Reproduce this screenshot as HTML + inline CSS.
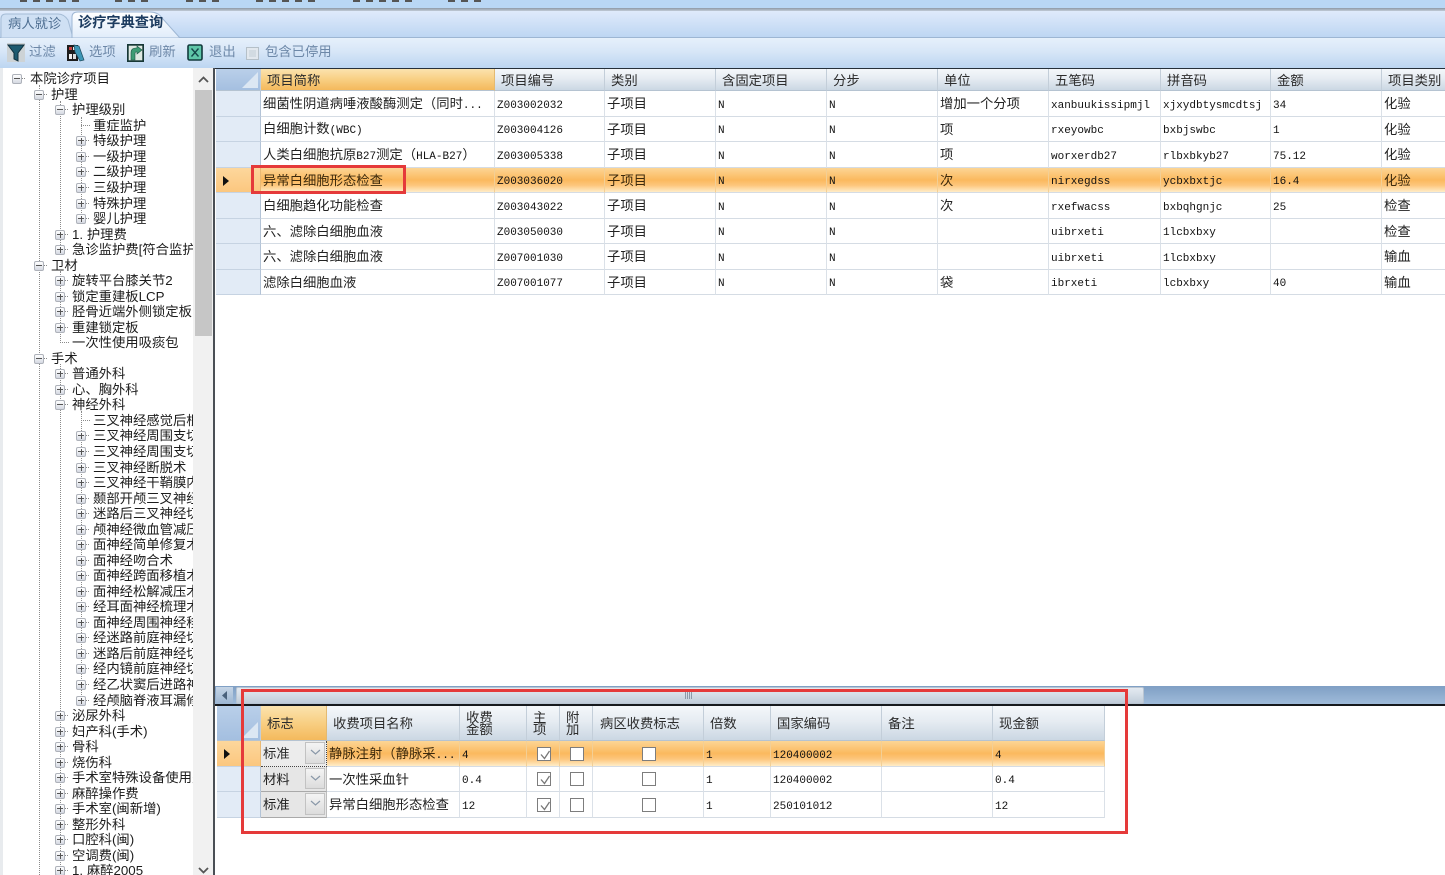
<!DOCTYPE html>
<html lang="zh"><head><meta charset="utf-8"><title>诊疗字典查询</title>
<style>
*{box-sizing:border-box}
html,body{margin:0;padding:0;width:1445px;height:875px;overflow:hidden;background:#fff}
body{position:relative;font:13.33px/1 "Liberation Sans","Noto Sans CJK SC",sans-serif;color:#222;filter:blur(.35px)}
.a{position:absolute}
tt{font:11px "Liberation Mono",monospace;color:#111}
.tb{color:#6d88a8;top:44px;line-height:15px}
/* tree */
#tree{left:3px;top:69px;width:190px;height:806px;overflow:hidden}
#rows{position:absolute;left:-3px;top:2.25px;width:193px}
#rows div{height:15.54px;line-height:15.5px;white-space:nowrap;position:relative;color:#1c1c1c}
.l0{padding-left:30px}.l1{padding-left:51px}.l2{padding-left:72px}.l3{padding-left:93px}
.v{position:absolute;width:0;border-left:1px dotted #8a8a8a}
#rows i{position:absolute;top:3px;width:10px;height:10px;border:1px solid #aeb2ba;border-radius:2px;background:linear-gradient(#fff,#d5d9e2)}
#rows i:before{content:"";position:absolute;left:1px;top:3px;width:6px;height:2px;border-top:1px solid #555}
#rows i:after{content:"";position:absolute;right:-4px;top:3px;width:3px;border-top:1px dotted #8a8a8a}
#rows i.p b{position:absolute;left:3.5px;top:1px;height:6px;border-left:1px solid #555}
.l0 i{left:12px}.l1 i{left:34px}.l2 i{left:55px}.l3 i{left:76px}
#rows em{position:absolute;top:7px;height:0;border-top:1px dotted #8a8a8a;width:9px}
.l3 em{left:81px}.l2 em{left:60px}
/* grids */
table{border-collapse:separate;border-spacing:0;table-layout:fixed;position:absolute}
td,th{padding:0 0 0 2px;border-right:1px solid #dbe1e8;border-bottom:1px solid #d5dce4;font-weight:400;text-align:left;white-space:nowrap;overflow:hidden;color:#222;line-height:15px}
th{padding:1px 0 0 6px;border-right:1px solid #c3ced9;border-bottom:1px solid #b5c3d1;background:linear-gradient(#f4f7fa,#e6ecf2 45%,#cbd7e3);color:#2c2c2c}
th.o{background:linear-gradient(#fbe3ae,#f8cf83 50%,#f4b95c);border-right-color:#e3ba72}
th.c{position:relative;background:linear-gradient(#b9cfe9,#a4bfe0);padding:0}
th.c:after{content:"";position:absolute;right:2px;bottom:2px;width:0;height:0;border-left:16px solid transparent;border-bottom:16px solid #dce7f3}
td.h{background:#e2ebf6;border-right:1px solid #b3c3d6;border-bottom:1px solid #c6d3e2;position:relative;padding:0}
tr.s td{background:linear-gradient(#fcd595,#fbb95e 50%,#fdc67c 72%,#ffedc9);border-right-color:#f3cf95;color:#3d2a0c}
tr.s td.h{background:linear-gradient(#fdd79c,#fbc77f);border-right-color:#e9b974}
tr.s td.h:after{content:"";position:absolute;left:7px;top:8px;border-left:6px solid #111;border-top:5px solid transparent;border-bottom:5px solid transparent}
.cb{display:block;width:14px;height:14px;margin:0 auto;border:1px solid #7d7d7d;background:#fff;position:relative}
.cb svg{position:absolute;left:1px;top:1px}
td.dd{background:#e6e6e6;padding:0 0 0 2px;position:relative;border-right:1px solid #bdbdbd;border-bottom:1px solid #a9a9a9}
tr.s td.dd{background:#ececec;border-bottom:1px dotted #444;border-right:1px dotted #444;color:#2c2c2c}
td.dd u{position:absolute;right:1px;top:1px;bottom:2px;width:20px;background:linear-gradient(#f4f4f4,#dcdcdc);border:1px solid #c2c2c2;text-decoration:none}
td.dd u svg{position:absolute;left:4px;top:6px}
.r{position:absolute;border:3px solid #e53a3a;pointer-events:none}
</style></head><body>

<!-- top menu strip -->
<div class="a" style="left:0;top:0;width:1445px;height:8px;background:#b9d7f5"></div>
<div class="a" style="left:0;top:8px;width:1445px;height:3px;background:linear-gradient(#8d99a6,#c1cbd6)"></div>
<div class="a" style="left:20px;top:0;width:60px;height:2px;background:repeating-linear-gradient(90deg,#555 0 7px,transparent 7px 13px)"></div>
<div class="a" style="left:115px;top:0;width:37px;height:2px;background:repeating-linear-gradient(90deg,#555 0 7px,transparent 7px 13px)"></div>
<div class="a" style="left:186px;top:0;width:37px;height:2px;background:repeating-linear-gradient(90deg,#555 0 7px,transparent 7px 13px)"></div>
<div class="a" style="left:256px;top:0;width:62px;height:2px;background:repeating-linear-gradient(90deg,#555 0 7px,transparent 7px 13px)"></div>
<div class="a" style="left:353px;top:0;width:60px;height:2px;background:repeating-linear-gradient(90deg,#555 0 7px,transparent 7px 13px)"></div>
<div class="a" style="left:448px;top:0;width:36px;height:2px;background:repeating-linear-gradient(90deg,#555 0 7px,transparent 7px 13px)"></div>

<!-- tab strip -->
<div class="a" style="left:0;top:11px;width:1445px;height:27px;background:linear-gradient(#dfeafb,#bcd5f2)"></div>
<div class="a" style="left:0;top:37px;width:1445px;height:1px;background:#9db6d3"></div>
<svg class="a" style="left:0;top:11px" width="200" height="28">
<path d="M1 27V8Q1 3 6 3H58Q64 3 68 9L73 27Z" fill="#cfe0f4" stroke="#a5bcd6"/>
<path d="M72 27V6Q72 1 78 1H150Q158 1 162 7L180 27Z" fill="url(#g)" stroke="#9db6d3"/>
<defs><linearGradient id="g" x1="0" y1="0" x2="0" y2="1"><stop offset="0" stop-color="#fff"/><stop offset="1" stop-color="#e0ecfa"/></linearGradient></defs>
</svg>
<div class="a" style="left:8px;top:16px;color:#4f6f92;line-height:15px">病人就诊</div>
<div class="a" style="left:78px;top:16px;color:#1d3c60;font-weight:700;font-size:14.2px;line-height:15px">诊疗字典查询</div>

<!-- toolbar -->
<div class="a" style="left:0;top:38px;width:1445px;height:30px;background:linear-gradient(#e6f0fb,#d7e6f7 45%,#bcd5f1)"></div>
<svg class="a" style="left:7px;top:43px" width="18" height="19"><rect width="18" height="19" fill="#cdd3d6"/><path d="M1 2H17L11 10V18L7 16V10Z" fill="#1d5a70" stroke="#0f2f3d"/></svg>
<svg class="a" style="left:67px;top:44px" width="18" height="18"><rect x="0" y="1" width="11" height="16" fill="#1c1c1c"/><rect x="2" y="3" width="3" height="3" fill="#c94040"/><rect x="6" y="3" width="3" height="3" fill="#e8e8e8"/><rect x="2" y="10" width="3" height="5" fill="#eee"/><rect x="6" y="10" width="3" height="5" fill="#ddd"/><path d="M7 1L12 2L17 16L13 17L8 8Z" fill="#3d96b5" stroke="#1d4a5d" stroke-width=".7"/></svg>
<svg class="a" style="left:127px;top:44px" width="17" height="18"><rect x=".8" y=".8" width="15.4" height="16.4" fill="#dfe9e2" stroke="#173836" stroke-width="1.8"/><path d="M4 16V9Q4 4 9 4H10V2L15 6L10 10V8H9Q8 8 8 10V16Z" fill="#3f9c74" stroke="#1c5443" stroke-width=".6"/></svg>
<svg class="a" style="left:187px;top:44px" width="16" height="17"><rect x="1" y="1" width="14" height="15" rx="1.500" fill="#5fc6a8" stroke="#123a3c" stroke-width="1.600"/><path d="M4.500 4.500L11.500 12.500M11.500 4.500L4.500 12.500" stroke="#14474a" stroke-width="1.400"/></svg>
<div class="a tb" style="left:29px">过滤</div>
<div class="a tb" style="left:89px">选项</div>
<div class="a tb" style="left:149px">刷新</div>
<div class="a tb" style="left:209px">退出</div>
<div class="a" style="left:246px;top:47px;width:13px;height:13px;border:1px solid #b5c0c8;background:#d2dbe2;box-shadow:inset 0 0 0 2px #e2e8ee"></div>
<div class="a tb" style="left:265px">包含已停用</div>

<!-- main frame -->
<div class="a" style="left:0;top:68px;width:3px;height:807px;background:#e8ebee"></div>
<div class="a" style="left:3px;top:68px;width:210px;height:807px;background:#fff"></div>
<div class="a" style="left:193px;top:68px;width:20px;height:807px;background:#f1f1f1"></div>
<div class="a" style="left:195px;top:90px;width:17px;height:246px;background:#c6c6c6"></div>
<svg class="a" style="left:197px;top:75px" width="13" height="10"><path d="M2 7L6.500 2.500L11 7" fill="none" stroke="#555" stroke-width="1.800"/></svg>
<svg class="a" style="left:197px;top:866px" width="13" height="9"><path d="M2 2L6.500 6.500L11 2" fill="none" stroke="#555" stroke-width="1.800"/></svg>
<div class="a" style="left:213px;top:68px;width:2px;height:807px;background:#4a4f55"></div>
<div class="a" style="left:215px;top:68px;width:1230px;height:1px;background:#26303a"></div>

<!-- tree -->
<div class="a" id="tree">
<div class="v" style="left:36px;top:16px;height:790px"></div>
<div class="v" style="left:57px;top:32px;height:150px"></div>
<div class="v" style="left:57px;top:202px;height:70px"></div>
<div class="v" style="left:57px;top:295px;height:511px"></div>
<div class="v" style="left:78px;top:48px;height:102px"></div>
<div class="v" style="left:78px;top:342px;height:290px"></div>
<div id="rows">
<div class="l0"><i></i>本院诊疗项目</div>
<div class="l1"><i></i>护理</div>
<div class="l2"><i></i>护理级别</div>
<div class="l3"><em></em>重症监护</div>
<div class="l3"><i class="p"><b></b></i>特级护理</div>
<div class="l3"><i class="p"><b></b></i>一级护理</div>
<div class="l3"><i class="p"><b></b></i>二级护理</div>
<div class="l3"><i class="p"><b></b></i>三级护理</div>
<div class="l3"><i class="p"><b></b></i>特殊护理</div>
<div class="l3"><i class="p"><b></b></i>婴儿护理</div>
<div class="l2"><i class="p"><b></b></i>1. 护理费</div>
<div class="l2"><i class="p"><b></b></i>急诊监护费[符合监护</div>
<div class="l1"><i></i>卫材</div>
<div class="l2"><i class="p"><b></b></i>旋转平台膝关节2</div>
<div class="l2"><i class="p"><b></b></i>锁定重建板LCP</div>
<div class="l2"><i class="p"><b></b></i>胫骨近端外侧锁定板</div>
<div class="l2"><i class="p"><b></b></i>重建锁定板</div>
<div class="l2"><em></em>一次性使用吸痰包</div>
<div class="l1"><i></i>手术</div>
<div class="l2"><i class="p"><b></b></i>普通外科</div>
<div class="l2"><i class="p"><b></b></i>心、胸外科</div>
<div class="l2"><i></i>神经外科</div>
<div class="l3"><em></em>三叉神经感觉后根</div>
<div class="l3"><i class="p"><b></b></i>三叉神经周围支切</div>
<div class="l3"><i class="p"><b></b></i>三叉神经周围支切</div>
<div class="l3"><i class="p"><b></b></i>三叉神经断脱术</div>
<div class="l3"><i class="p"><b></b></i>三叉神经干鞘膜内</div>
<div class="l3"><i class="p"><b></b></i>颞部开颅三叉神经</div>
<div class="l3"><i class="p"><b></b></i>迷路后三叉神经切</div>
<div class="l3"><i class="p"><b></b></i>颅神经微血管减压</div>
<div class="l3"><i class="p"><b></b></i>面神经简单修复术</div>
<div class="l3"><i class="p"><b></b></i>面神经吻合术</div>
<div class="l3"><i class="p"><b></b></i>面神经跨面移植术</div>
<div class="l3"><i class="p"><b></b></i>面神经松解减压术</div>
<div class="l3"><i class="p"><b></b></i>经耳面神经梳理术</div>
<div class="l3"><i class="p"><b></b></i>面神经周围神经移</div>
<div class="l3"><i class="p"><b></b></i>经迷路前庭神经切</div>
<div class="l3"><i class="p"><b></b></i>迷路后前庭神经切</div>
<div class="l3"><i class="p"><b></b></i>经内镜前庭神经切</div>
<div class="l3"><i class="p"><b></b></i>经乙状窦后进路神</div>
<div class="l3"><i class="p"><b></b></i>经颅脑脊液耳漏修</div>
<div class="l2"><i class="p"><b></b></i>泌尿外科</div>
<div class="l2"><i class="p"><b></b></i>妇产科(手术)</div>
<div class="l2"><i class="p"><b></b></i>骨科</div>
<div class="l2"><i class="p"><b></b></i>烧伤科</div>
<div class="l2"><i class="p"><b></b></i>手术室特殊设备使用费</div>
<div class="l2"><i class="p"><b></b></i>麻醉操作费</div>
<div class="l2"><i class="p"><b></b></i>手术室(闽新增)</div>
<div class="l2"><i class="p"><b></b></i>整形外科</div>
<div class="l2"><i class="p"><b></b></i>口腔科(闽)</div>
<div class="l2"><i class="p"><b></b></i>空调费(闽)</div>
<div class="l2"><i class="p"><b></b></i>1. 麻醉2005</div>
</div></div>

<!-- upper grid -->
<div class="a" style="left:216px;top:69px;width:1229px;height:617px;overflow:hidden;background:#fff">
<table style="left:0;top:0;width:1280px">
<colgroup><col style="width:45px"><col style="width:234px"><col style="width:110px"><col style="width:111px"><col style="width:111px"><col style="width:111px"><col style="width:111px"><col style="width:112px"><col style="width:110px"><col style="width:111px"><col style="width:114px"></colgroup>
<tr style="height:22px"><th class="c"></th><th class="o">项目简称</th><th>项目编号</th><th>类别</th><th>含固定项目</th><th>分步</th><th>单位</th><th>五笔码</th><th>拼音码</th><th>金额</th><th>项目类别</th></tr>
<tr style="height:26px"><td class="h"></td><td>细菌性阴道病唾液酸酶测定（同时<tt>...</tt></td><td><tt>Z003002032</tt></td><td>子项目</td><td><tt>N</tt></td><td><tt>N</tt></td><td>增加一个分项</td><td><tt>xanbuukissipmjl</tt></td><td><tt>xjxydbtysmcdtsj</tt></td><td><tt>34</tt></td><td>化验</td></tr>
<tr style="height:25px"><td class="h"></td><td>白细胞计数<tt>(WBC)</tt></td><td><tt>Z003004126</tt></td><td>子项目</td><td><tt>N</tt></td><td><tt>N</tt></td><td>项</td><td><tt>rxeyowbc</tt></td><td><tt>bxbjswbc</tt></td><td><tt>1</tt></td><td>化验</td></tr>
<tr style="height:26px"><td class="h"></td><td>人类白细胞抗原<tt>B27</tt>测定（<tt>HLA-B27</tt>）</td><td><tt>Z003005338</tt></td><td>子项目</td><td><tt>N</tt></td><td><tt>N</tt></td><td>项</td><td><tt>worxerdb27</tt></td><td><tt>rlbxbkyb27</tt></td><td><tt>75.12</tt></td><td>化验</td></tr>
<tr class="s" style="height:25px"><td class="h"></td><td>异常白细胞形态检查</td><td><tt>Z003036020</tt></td><td>子项目</td><td><tt>N</tt></td><td><tt>N</tt></td><td>次</td><td><tt>nirxegdss</tt></td><td><tt>ycbxbxtjc</tt></td><td><tt>16.4</tt></td><td>化验</td></tr>
<tr style="height:26px"><td class="h"></td><td>白细胞趋化功能检查</td><td><tt>Z003043022</tt></td><td>子项目</td><td><tt>N</tt></td><td><tt>N</tt></td><td>次</td><td><tt>rxefwacss</tt></td><td><tt>bxbqhgnjc</tt></td><td><tt>25</tt></td><td>检查</td></tr>
<tr style="height:25px"><td class="h"></td><td>六、滤除白细胞血液</td><td><tt>Z003050030</tt></td><td>子项目</td><td><tt>N</tt></td><td><tt>N</tt></td><td></td><td><tt>uibrxeti</tt></td><td><tt>1lcbxbxy</tt></td><td></td><td>检查</td></tr>
<tr style="height:26px"><td class="h"></td><td>六、滤除白细胞血液</td><td><tt>Z007001030</tt></td><td>子项目</td><td><tt>N</tt></td><td><tt>N</tt></td><td></td><td><tt>uibrxeti</tt></td><td><tt>1lcbxbxy</tt></td><td></td><td>输血</td></tr>
<tr style="height:25px"><td class="h"></td><td>滤除白细胞血液</td><td><tt>Z007001077</tt></td><td>子项目</td><td><tt>N</tt></td><td><tt>N</tt></td><td>袋</td><td><tt>ibrxeti</tt></td><td><tt>lcbxbxy</tt></td><td><tt>40</tt></td><td>输血</td></tr>
</table></div>

<!-- horizontal scrollbar -->
<div class="a" style="left:215px;top:686px;width:1230px;height:18px;background:linear-gradient(#7f9fc4,#9fbbda)"></div>
<div class="a" style="left:216px;top:687px;width:17px;height:17px;background:linear-gradient(#c5d5e6,#9db6d2)"></div>
<svg class="a" style="left:220px;top:690px" width="9" height="11"><path d="M7 1L2 5.500L7 10Z" fill="#4a627c"/></svg>
<div class="a" style="left:236px;top:687px;width:908px;height:17px;background:linear-gradient(#e4eaf1,#d3dce6 50%,#c0ccd9);border:1px solid #b9c5d2;border-radius:2px"></div>
<div class="a" style="left:685px;top:692px;width:7px;height:7px;background:repeating-linear-gradient(90deg,#8b99a8 0 1px,transparent 1px 2px)"></div>
<div class="a" style="left:215px;top:704px;width:1230px;height:2px;background:#16191d"></div>

<!-- lower grid -->
<div class="a" style="left:216px;top:706px;width:1229px;height:169px;background:#fff;overflow:hidden">
<table style="left:1px;top:0;width:888px">
<colgroup><col style="width:44px"><col style="width:66px"><col style="width:133px"><col style="width:67px"><col style="width:33px"><col style="width:33px"><col style="width:111px"><col style="width:67px"><col style="width:111px"><col style="width:111px"><col style="width:112px"></colgroup>
<tr style="height:35px"><th class="c"></th><th class="o">标志</th><th>收费项目名称</th><th style="line-height:12px">收费<br>金额</th><th style="line-height:12px">主<br>项</th><th style="line-height:12px">附<br>加</th><th style="padding-left:7px">病区收费标志</th><th>倍数</th><th>国家编码</th><th>备注</th><th>现金额</th></tr>
<tr class="s" style="height:26px"><td class="h"></td><td class="dd">标准<u><svg width="11" height="7"><path d="M1 1L5.500 5L10 1" fill="none" stroke="#8a98a8" stroke-width="1.200"/></svg></u></td><td>静脉注射（静脉采<tt>...</tt></td><td><tt>4</tt></td><td><span class="cb"><svg width="12" height="12"><path d="M2 5.500L5.500 9.500L10.500 2" fill="none" stroke="#777" stroke-width="1.300"/></svg></span></td><td><span class="cb"></span></td><td><span class="cb"></span></td><td><tt>1</tt></td><td><tt>120400002</tt></td><td></td><td><tt>4</tt></td></tr>
<tr style="height:25px"><td class="h"></td><td class="dd">材料<u><svg width="11" height="7"><path d="M1 1L5.500 5L10 1" fill="none" stroke="#8a98a8" stroke-width="1.200"/></svg></u></td><td>一次性采血针</td><td><tt>0.4</tt></td><td><span class="cb"><svg width="12" height="12"><path d="M2 5.500L5.500 9.500L10.500 2" fill="none" stroke="#777" stroke-width="1.300"/></svg></span></td><td><span class="cb"></span></td><td><span class="cb"></span></td><td><tt>1</tt></td><td><tt>120400002</tt></td><td></td><td><tt>0.4</tt></td></tr>
<tr style="height:26px"><td class="h"></td><td class="dd">标准<u><svg width="11" height="7"><path d="M1 1L5.500 5L10 1" fill="none" stroke="#8a98a8" stroke-width="1.200"/></svg></u></td><td>异常白细胞形态检查</td><td><tt>12</tt></td><td><span class="cb"><svg width="12" height="12"><path d="M2 5.500L5.500 9.500L10.500 2" fill="none" stroke="#777" stroke-width="1.300"/></svg></span></td><td><span class="cb"></span></td><td><span class="cb"></span></td><td><tt>1</tt></td><td><tt>250101012</tt></td><td></td><td><tt>12</tt></td></tr>
</table></div>

<!-- red annotation boxes -->
<div class="r" style="left:251px;top:165px;width:155px;height:29px"></div>
<div class="r" style="left:241px;top:689px;width:887px;height:145px"></div>
</body></html>
